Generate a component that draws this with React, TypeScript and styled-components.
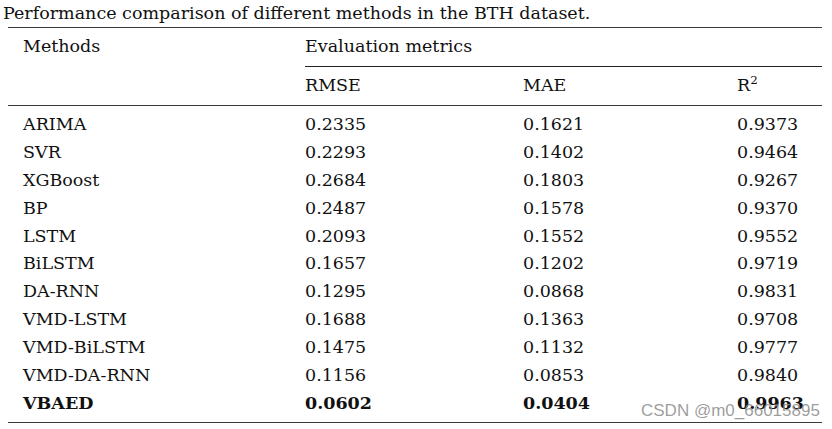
import styled, { createGlobalStyle } from "styled-components";

const GlobalStyle = createGlobalStyle`
  html, body {
    margin: 0;
    padding: 0;
    background: #ffffff;
  }
`;

const Page = styled.div`
  width: 832px;
  height: 429px;
  position: relative;
  overflow: hidden;
  font-family: "DejaVu Serif", "Liberation Serif", serif;
  font-size: 17.5px;
  color: #111;
`;

const Caption = styled.div`
  line-height: 20px;
  padding: 3px 0 0 3px;
  height: 24px;
  white-space: nowrap;
`;

const Table = styled.table`
  margin-left: 8px;
  width: 814px;
  border-collapse: collapse;
  border-top: 1.5px solid #3a3a3a;
  border-bottom: 1.5px solid #3a3a3a;
  table-layout: fixed;
`;

const Head = styled.thead`
  border-bottom: 1.5px solid #3a3a3a;
`;

const Th = styled.th<{ $rule?: boolean; $first?: boolean }>`
  font-weight: normal;
  text-align: left;
  padding: 0 0 3px ${(p) => (p.$first ? "15px" : "0")};
  height: 35px;
  line-height: 20px;
  vertical-align: middle;
  border-bottom: ${(p) => (p.$rule ? "1px solid #222" : "none")};
`;

const Td = styled.td<{ $first?: boolean }>`
  padding: 0 0 0 ${(p) => (p.$first ? "15px" : "0")};
  height: 27.9px;
  line-height: 20px;
  vertical-align: middle;
`;

const Row = styled.tr<{ $bold?: boolean; $edge?: "top" | "bottom" }>`
  font-weight: ${(p) => (p.$bold ? "bold" : "normal")};
  td {
    padding-top: ${(p) => (p.$edge === "top" ? "4px" : "0")};
    padding-bottom: ${(p) => (p.$edge === "bottom" ? "5px" : "0")};
  }
`;

const Sup = styled.sup`
  font-size: 0.68em;
  line-height: 0;
`;

const Watermark = styled.div`
  position: absolute;
  left: 641px;
  top: 401px;
  font-family: "Liberation Sans", Arial, sans-serif;
  font-size: 17px;
  color: rgba(140, 140, 140, 0.85);
  white-space: nowrap;
`;

const rows = [
  ["ARIMA", "0.2335", "0.1621", "0.9373"],
  ["SVR", "0.2293", "0.1402", "0.9464"],
  ["XGBoost", "0.2684", "0.1803", "0.9267"],
  ["BP", "0.2487", "0.1578", "0.9370"],
  ["LSTM", "0.2093", "0.1552", "0.9552"],
  ["BiLSTM", "0.1657", "0.1202", "0.9719"],
  ["DA-RNN", "0.1295", "0.0868", "0.9831"],
  ["VMD-LSTM", "0.1688", "0.1363", "0.9708"],
  ["VMD-BiLSTM", "0.1475", "0.1132", "0.9777"],
  ["VMD-DA-RNN", "0.1156", "0.0853", "0.9840"],
  ["VBAED", "0.0602", "0.0404", "0.9963"],
];

export default function App() {
  return (
    <Page>
      <GlobalStyle />
      <Caption>Performance comparison of different methods in the BTH dataset.</Caption>
      <Table>
        <colgroup>
          <col style={{ width: 297 }} />
          <col style={{ width: 218 }} />
          <col style={{ width: 214 }} />
          <col />
        </colgroup>
        <Head>
          <tr>
            <Th $first>Methods</Th>
            <Th colSpan={3} $rule>
              Evaluation metrics
            </Th>
          </tr>
          <tr>
            <Th />
            <Th>RMSE</Th>
            <Th>MAE</Th>
            <Th>
              R<Sup>2</Sup>
            </Th>
          </tr>
        </Head>
        <tbody>
          {rows.map((r, i) => (
            <Row
              key={r[0]}
              $bold={i === rows.length - 1}
              $edge={i === 0 ? "top" : i === rows.length - 1 ? "bottom" : undefined}
            >
              <Td $first>{r[0]}</Td>
              <Td>{r[1]}</Td>
              <Td>{r[2]}</Td>
              <Td>{r[3]}</Td>
            </Row>
          ))}
        </tbody>
      </Table>
      <Watermark>CSDN @m0_66015895</Watermark>
    </Page>
  );
}
